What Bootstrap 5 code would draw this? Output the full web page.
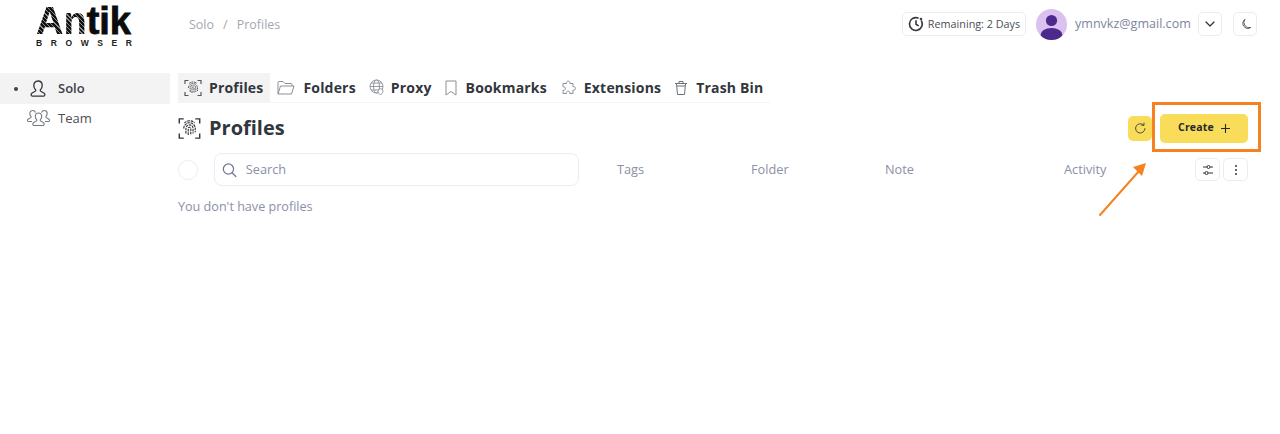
<!doctype html>
<html lang="en">
<head>
  <meta charset="utf-8">
  <meta name="viewport" content="width=device-width, initial-scale=1">
  <title>Antik Browser - Profiles</title>
  <link href="https://cdn.jsdelivr.net/npm/bootstrap@5.3.3/dist/css/bootstrap.min.css" rel="stylesheet">
  <style>
    body { font-family: "Open Sans", "Liberation Sans", sans-serif; background: #fff; height: 434px; overflow: hidden; color: #32363d; }
    .ab-top { height: 48px; }
    .ab-brand { width: 170px; padding-left: 36px; line-height: 1; flex: none; padding-top: 4px; }
    .ab-word { font-family: "Liberation Sans", sans-serif; font-weight: 700; font-size: 38px; line-height: 32px; height: 32px; color: #0c0c0c; -webkit-text-stroke: .8px #0c0c0c; }
    .ab-word span { background: repeating-linear-gradient(45deg, #111 0 2px, #8d8d8d 2px 3px); -webkit-background-clip: text; background-clip: text; color: transparent; -webkit-text-stroke: 0; }
    .ab-sub { font-family: "Liberation Sans", sans-serif; font-size: 8.5px; font-weight: 700; letter-spacing: 8.6px; color: #222; margin-top: 2px; white-space: nowrap; }
    .ab-crumbs { margin: 2px 0 0 19px; font-size: 12.5px; --bs-breadcrumb-divider-color: #a4a8b0; --bs-breadcrumb-item-active-color: #a4a8b0; --bs-breadcrumb-margin-bottom: 0; color: #a4a8b0; }
    .ab-crumbs .breadcrumb-item + .breadcrumb-item { padding-left: 9px; }
    .ab-crumbs .breadcrumb-item + .breadcrumb-item::before { padding-right: 9px; }
    .ab-boxed { border: 1px solid #ececf0; border-radius: 5px; background: #fff; display: flex; align-items: center; justify-content: center; padding: 0; }
    .ab-remain { width: 124px; height: 24px; font-size: 10.8px; color: #4a4e55; gap: 4px; }
    .ab-avatar { width: 31px; height: 31px; border-radius: 50%; background: #dcc0f0; overflow: hidden; margin-left: 10px; flex: none; }
    .ab-mail { font-size: 12.55px; color: #7d84a0; margin-left: 8px; width: 123px; }
    .ab-sq { width: 24px; height: 24px; }
    .ab-theme { margin: 0 23px 0 11px; }
    .ab-sq-sm { width: 25px; height: 23px; }
    .ab-more { margin-left: 3px; }
    .ab-side { width: 170px; flex: none; padding-top: 25px; font-size: 13px; }
    .ab-side-item { height: 31px; display: flex; align-items: center; color: #4a4e55; }
    .ab-side-item.ab-on { background: #f3f3f3; font-weight: 600; color: #3c4047; margin-bottom: -1px; }
    .ab-dot { width: 4px; height: 4px; border-radius: 50%; background: #444; margin-left: 14px; margin-right: 10px; }
    .ab-solo-ic { margin-right: 10px; }
    .ab-team { padding-left: 26px; }
    .ab-team-ic { margin-right: 7px; }
    .ab-main { margin-left: 8px; padding-top: 25px; flex: 1; padding-right: 32px; }
    .ab-tabs { width: 592px; height: 30px; border-bottom: 1px solid #f4f4f6; flex-wrap: nowrap; }
    .ab-tab { display: flex; align-items: center; gap: 8px; height: 29px; font-size: 14px; font-weight: 700; color: #32363d; letter-spacing: .18px; text-decoration: none; margin-left: 13px; }
    .ab-tab.ab-cur { background: #f3f3f3; padding: 0 7px 0 6px; gap: 7px; margin-left: 0; }
    .ab-tab.ab-cur + .ab-tab { margin-left: 7px; }
    .ab-tab.ab-gap6 { gap: 6px; }
    .ab-tab.ab-gap6 + .ab-tab { margin-left: 12px; }
    .ab-head { height: 50px; }
    .ab-title { font-size: 20px; font-weight: 700; margin: 0; color: #32363d; }
    .ab-refresh { width: 24px; height: 25px; background: #f8dc5a; border-radius: 5px; border: 0; display: flex; align-items: center; justify-content: center; padding: 0; margin-right: 8px; }
    .ab-create { width: 88px; height: 29px; background: #f8dc5a; border: 0; border-radius: 5px; font-size: 10.5px; font-weight: 700; color: #26282c; padding: 0 0 0 1px; letter-spacing: .2px; display: flex; align-items: center; justify-content: center; gap: 6px; }
    .ab-create:hover { background: #f8dc5a; }
    .ab-row { height: 33px; font-size: 12.75px; color: #8a90a6; }
    .ab-check { width: 20px; height: 20px; margin: 0 16px 0 0; border: 1px solid #eeeef2; border-radius: 50%; flex: none; }
    .ab-search { width: 365px; height: 33px; border: 1px solid #ececf0; border-radius: 8px; display: flex; align-items: center; padding-left: 6px; gap: 8px; flex: none; }
    .ab-search input { border: 0; outline: 0; padding: 0; font-size: 12.75px; background: transparent; box-shadow: none; }
    .ab-search input::placeholder { color: #8a90a6; opacity: 1; }
    .ab-col-tags { margin-left: 38px; width: 134px; }
    .ab-col-folder { width: 134px; }
    .ab-col-note { width: 179px; }
    .ab-col-act { width: 131px; }
    .ab-empty { font-size: 12.6px; color: #8a90a6; margin-top: 12px; }
    .ab-mark { position: absolute; left: 1152px; top: 102px; width: 109px; height: 50px; border: 3px solid #f58220; pointer-events: none; }
    .ab-arrow { position: absolute; left: 1095px; top: 160px; }
  </style>
</head>
<body>

<!-- Header -->
<header class="ab-top d-flex align-items-center">
  <div class="ab-brand">
    <div class="ab-word"><span>An</span>tik</div>
    <div class="ab-sub">BROWSER</div>
  </div>
  <nav aria-label="breadcrumb">
    <ol class="breadcrumb ab-crumbs">
      <li class="breadcrumb-item">Solo</li>
      <li class="breadcrumb-item active">Profiles</li>
    </ol>
  </nav>
  <div class="ms-auto d-flex align-items-center">
    <div class="ab-boxed ab-remain">
      <svg width="16" height="16" viewBox="0 0 16 16" fill="none" stroke="#33363c" stroke-width="1.6" stroke-linecap="round"><path d="M13.5 5A6.4 6.4 0 1 1 10 2"/><path d="M8 4.8V8.3L10.2 9.6"/><circle cx="13" cy="3" r=".5"/></svg>
      <span>Remaining: 2 Days</span>
    </div>
    <div class="ab-avatar">
      <svg width="31" height="31" viewBox="0 0 31 31"><circle cx="15.5" cy="11.5" r="5.6" fill="#4b2a8c"/><ellipse cx="15.5" cy="26" rx="11" ry="7" fill="#4b2a8c"/></svg>
    </div>
    <span class="ab-mail">ymnvkz@gmail.com</span>
    <button class="ab-boxed ab-sq" type="button" aria-label="Menu">
      <svg width="12" height="12" viewBox="0 0 12 12" fill="none" stroke="#33363c" stroke-width="1.3" stroke-linecap="round" stroke-linejoin="round"><path d="M2 4l4 4 4-4"/></svg>
    </button>
    <button class="ab-boxed ab-sq ab-theme" type="button" aria-label="Theme">
      <svg width="13" height="13" viewBox="0 0 13 13" fill="none" stroke="#5a5e66" stroke-width="1" stroke-linejoin="round"><path d="M6 1.2A5 5 0 0 0 11.8 9.5 5.3 5.3 0 0 1 6 1.2z"/></svg>
    </button>
  </div>
</header>

<div class="d-flex">
  <!-- Sidebar -->
  <aside class="ab-side">
    <div class="ab-side-item ab-on">
      <span class="ab-dot"></span>
      <svg class="ab-solo-ic" width="20" height="20" viewBox="0 0 20 20" fill="none" stroke="#33363c" stroke-width="1.3" stroke-linejoin="round"><path d="M10 2C7.4 2 5.8 4 5.8 6.4c0 2 .9 3.4 1.8 4.3.3.5.2 1.2-.4 1.6l-3.4 2c-1 .7-1 2.9.6 2.9h11.2c1.6 0 1.6-2.2.6-2.9l-3.4-2c-.6-.4-.7-1.1-.4-1.6.9-.9 1.8-2.3 1.8-4.3C14.2 4 12.6 2 10 2z"/></svg>
      <span>Solo</span>
    </div>
    <div class="ab-side-item ab-team">
      <svg class="ab-team-ic" width="25" height="20" viewBox="0 0 25 20" fill="none" stroke="#777b83" stroke-width="1.1" stroke-linejoin="round"><path d="M12.5 4c-2 0-3.2 1.5-3.2 3.4 0 1.5.7 2.6 1.4 3.3.2.4.1 1-.3 1.2l-3 1.8c-.8.6-.8 2.8.5 2.8h9.2c1.3 0 1.3-2.2.5-2.800l-3-1.800c-.4-.2-.5-.8-.3-1.200.7-.7 1.400-1.800 1.400-3.300 0-1.900-1.200-3.400-3.200-3.400z"/><path d="M9.5 3.500C9 2.300 8 1.500 6.700 1.500 5 1.500 3.800 2.900 3.800 4.600c0 1.300.6 2.300 1.200 2.900.2.400.1.900-.3 1.100L2 10.200c-.8.500-.8 2.300.4 2.300H6"/><path d="M15.500 3.500c.5-1.200 1.500-2 2.800-2 1.700 0 2.900 1.400 2.900 3.100 0 1.300-.6 2.300-1.200 2.900-.2.400-.1.900.3 1.100l2.700 1.600c.8.500.8 2.300-.4 2.300H19"/></svg>
      <span>Team</span>
    </div>
  </aside>

  <main class="ab-main">
    <!-- Tabs -->
    <nav class="nav ab-tabs">
      <a class="ab-tab ab-cur" href="#">
        <svg width="18" height="18" viewBox="0 0 18 18" fill="none" stroke="#55585e" stroke-width="1"><path d="M1 5V1.500h3.500M13.500 1.500H17V5M1 13v3.500h3.500M13.500 16.500H17V13" stroke-width="1.200"/><path d="M4.500 9a4.500 4.500 0 0 1 9 0v3M6.200 13V9a2.800 2.800 0 0 1 5.600 0v4M8 14V9a1 1 0 0 1 2 0v5M5 4.500a6 6 0 0 1 8 0" stroke-dasharray="2 .6"/></svg>
        <span>Profiles</span>
      </a>
      <a class="ab-tab" href="#">
        <svg width="18" height="16" viewBox="0 0 18 16" fill="none" stroke="#8b8f97" stroke-width="1" stroke-linejoin="round"><path d="M1 14V2.500C1 2 1.400 1.500 2 1.500h4l2 2h6c.6 0 1 .4 1 1V6"/><path d="M1 14l2.500-8H17l-2.500 8z"/></svg>
        <span>Folders</span>
      </a>
      <a class="ab-tab ab-gap6" href="#">
        <svg width="16" height="17" viewBox="0 0 16 17" fill="none" stroke="#8b8f97" stroke-width=".9"><circle cx="7.500" cy="7.500" r="6.500"/><ellipse cx="7.500" cy="7.500" rx="3" ry="6.500"/><path d="M1 7.500h13M2 4h11M2 11h11"/><path d="M11.500 16c-1.600-1.500-2.500-2.700-2.500-3.800a2.500 2.500 0 0 1 5 0c0 1.100-.9 2.300-2.500 3.800z" fill="#fff"/></svg>
        <span>Proxy</span>
      </a>
      <a class="ab-tab" href="#">
        <svg width="14" height="16" viewBox="0 0 14 16" fill="none" stroke="#8b8f97" stroke-width="1" stroke-linejoin="round"><path d="M2 1h10v14l-5-3.500L2 15z"/></svg>
        <span>Bookmarks</span>
      </a>
      <a class="ab-tab" href="#">
        <svg width="16" height="16" viewBox="0 0 16 16" fill="none" stroke="#8b8f97" stroke-width="1" stroke-linejoin="round"><path d="M6.500 3.500a1.800 1.800 0 1 1 3.400 0H13v3.200a1.800 1.800 0 1 1 0 3.400V13.500H9.800a1.800 1.800 0 1 0-3.400 0H3v-3.200a1.800 1.800 0 1 0 0-3.400V3.500z"/></svg>
        <span>Extensions</span>
      </a>
      <a class="ab-tab" href="#">
        <svg width="14" height="16" viewBox="0 0 14 16" fill="none" stroke="#6d7178" stroke-width="1" stroke-linejoin="round"><path d="M1 3.500h12M5 3.500V1.500h4v2M2.500 3.500l1 11h7l1-11"/><path d="M3 6h8"/></svg>
        <span>Trash Bin</span>
      </a>
    </nav>

    <!-- Page title -->
    <div class="ab-head d-flex align-items-center">
      <svg class="me-2" width="23" height="23" viewBox="0 0 18 18" fill="none" stroke="#33363c" stroke-width=".9"><path d="M1 5V1.500h3.500M13.500 1.500H17V5M1 13v3.500h3.500M13.500 16.500H17V13" stroke-width="1.100"/><path d="M4.500 9a4.500 4.500 0 0 1 9 0v3M6.200 13V9a2.800 2.800 0 0 1 5.600 0v4M8 14V9a1 1 0 0 1 2 0v5M5 4.500a6 6 0 0 1 8 0" stroke-dasharray="2 .6"/></svg>
      <h1 class="ab-title">Profiles</h1>
      <div class="ms-auto d-flex align-items-center">
        <button class="ab-refresh" type="button" aria-label="Refresh">
          <svg width="13" height="13" viewBox="0 0 13 13" fill="none" stroke="#55503a" stroke-width="1" stroke-linecap="round" stroke-linejoin="round"><path d="M11 6.500A4.700 4.700 0 1 1 9.600 3"/><path d="M10 1v2.300H7.800"/></svg>
        </button>
        <button class="btn ab-create" type="button">Create
          <svg width="11" height="11" viewBox="0 0 11 11" fill="none" stroke="#26282c" stroke-width="1.100"><path d="M5.500 1v9M1 5.500h9"/></svg>
        </button>
      </div>
    </div>

    <!-- Column header row -->
    <div class="ab-row d-flex align-items-center">
      <div class="ab-check"></div>
      <div class="ab-search">
        <svg width="18" height="18" viewBox="0 0 18 18" fill="none" stroke="#6d7696" stroke-width="1.300" stroke-linecap="round"><circle cx="8" cy="8" r="5.500"/><path d="M12 12l4 4"/></svg>
        <input class="form-control" type="text" placeholder="Search">
      </div>
      <div class="ab-col-tags">Tags</div>
      <div class="ab-col-folder">Folder</div>
      <div class="ab-col-note">Note</div>
      <div class="ab-col-act">Activity</div>
      <button class="ab-boxed ab-sq-sm" type="button" aria-label="Filters">
        <svg width="14" height="14" viewBox="0 0 14 14" fill="none" stroke="#33363c" stroke-width="1"><path d="M2 4h4M9 4h3M2 10h2M7 10h5"/><circle cx="7.500" cy="4" r="1.500"/><circle cx="5.500" cy="10" r="1.500"/></svg>
      </button>
      <button class="ab-boxed ab-sq-sm ab-more" type="button" aria-label="More">
        <svg width="4" height="12" viewBox="0 0 4 12" fill="#33363c"><circle cx="2" cy="2" r="1"/><circle cx="2" cy="6" r="1"/><circle cx="2" cy="10" r="1"/></svg>
      </button>
    </div>
    <p class="ab-empty">You don't have profiles</p>
  </main>
</div>

<!-- Screenshot annotation -->
<div class="ab-mark"></div>
<svg class="ab-arrow" width="56" height="60" viewBox="0 0 56 60" fill="none"><path d="M5 55L44 11" stroke="#f58220" stroke-width="2" stroke-linecap="round"/><path d="M51 3L38 7l9 9z" fill="#f58220"/></svg>

<script src="https://cdn.jsdelivr.net/npm/bootstrap@5.3.3/dist/js/bootstrap.bundle.min.js"></script>
</body>
</html>
